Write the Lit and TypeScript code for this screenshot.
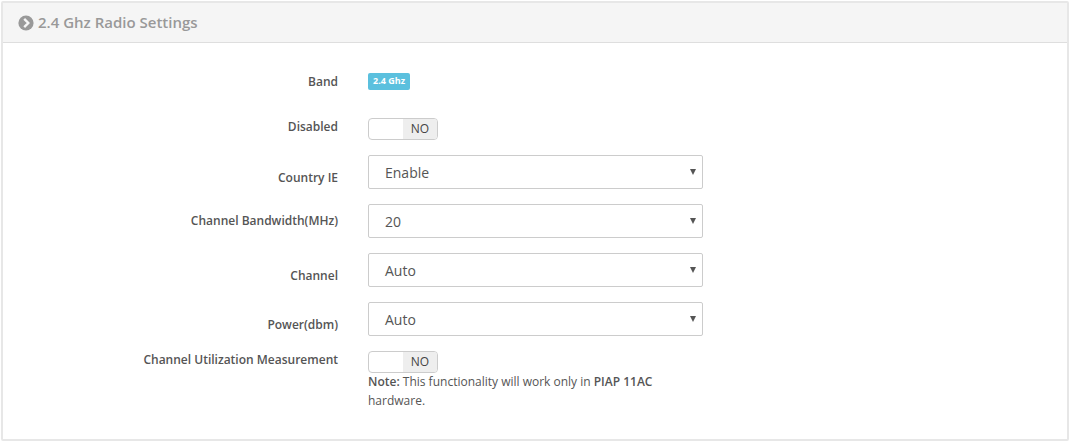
import { LitElement, html, css } from "lit";
import { customElement } from "lit/decorators.js";

@customElement("app-root")
export class AppRoot extends LitElement {
  static styles = css`
    :host { display: block; width: 1070px; height: 442px; background: #fff; font-family: "Open Sans", sans-serif; color: #555; box-sizing: border-box; padding: 1px 1px 0 1px; overflow: hidden; }
    .panel { border: 2px solid #e7e7e7; height: 440px; box-sizing: border-box; border-radius: 2px; }
    .head { height: 37px; padding-bottom: 2px; background: #f5f5f5; border-bottom: 1px solid #dedede; display: flex; align-items: center; gap: 4px; padding-left: 15px; color: #999; font-size: 15px; font-weight: 600; }
    .head svg { width: 16px; height: 16px; display: block; position: relative; top: 1px; }
    .form { padding-top: 30px; display: flex; flex-direction: column; }
    .row { display: grid; grid-template-columns: 335px 335px; column-gap: 30px; align-items: start; }
    .lab { text-align: right; font-size: 12px; font-weight: 600; color: #555; line-height: 17px; }
    .r-band { height: 46px; }
    .r-dis { height: 36px; margin-top: -1px; margin-bottom: 1px; }
    .r-dis .lab { padding-top: 0; }
    .r-sel { height: 49px; }
    .r-sel .lab { padding-top: 14px; }
    .r-sel.c .lab { padding-top: 8px; }
    .badge { display: block; width: fit-content; background: #5bc0de; color: #fff; font-size: 9px; font-weight: 700; line-height: 15px; height: 17px; padding: 0 5px; border-radius: 2px; }
    .toggle { width: 70px; height: 22px; border: 1px solid #ccc; border-radius: 4px; box-sizing: border-box; display: flex; overflow: hidden; background: #fff; }
    .toggle .off { width: 34px; }
    .toggle .no { flex: 1; background: #eee; font-size: 12px; line-height: 20px; text-align: center; color: #444; }
    .sel { height: 34px; border: 1px solid #ccc; border-radius: 2px; box-sizing: border-box; display: flex; align-items: center; justify-content: space-between; padding: 0 6px 0 16px; font-size: 14px; color: #555; }
    .caret { width: 0; height: 0; border-left: 3px solid transparent; border-right: 3px solid transparent; border-top: 6px solid #555; }
    .note { font-size: 12px; line-height: 19px; color: #555; margin-top: -1px; }
    .note b { font-weight: 600; }
  `;

  private sel(label: string, value: string, c = false) {
    return html`<div class="row r-sel ${c ? "c" : ""}">
      <div class="lab">${label}</div>
      <div class="sel"><span>${value}</span><span class="caret"></span></div>
    </div>`;
  }

  private toggle() {
    return html`<div class="toggle"><div class="off"></div><div class="no">NO</div></div>`;
  }

  render() {
    return html`<div class="panel">
      <div class="head">
        <svg viewBox="0 0 16 16"><circle cx="8" cy="8" r="7.6" fill="#999"/><path d="M6.2 3.9 10.3 8l-4.1 4.1" fill="none" stroke="#f5f5f5" stroke-width="2.4"/></svg>
        <span>2.4 Ghz Radio Settings</span>
      </div>
      <div class="form">
        <div class="row r-band"><div class="lab">Band</div><div><span class="badge">2.4 Ghz</span></div></div>
        <div class="row r-dis"><div class="lab">Disabled</div><div>${this.toggle()}</div></div>
        ${this.sel("Country IE", "Enable")}
        ${this.sel("Channel Bandwidth(MHz)", "20", true)}
        ${this.sel("Channel", "Auto")}
        ${this.sel("Power(dbm)", "Auto")}
        <div class="row"><div class="lab">Channel Utilization Measurement</div><div>${this.toggle()}
          <div class="note"><b>Note:</b> This functionality will work only in <b>PIAP 11AC</b> hardware.</div></div></div>
      </div>
    </div>`;
  }
}
